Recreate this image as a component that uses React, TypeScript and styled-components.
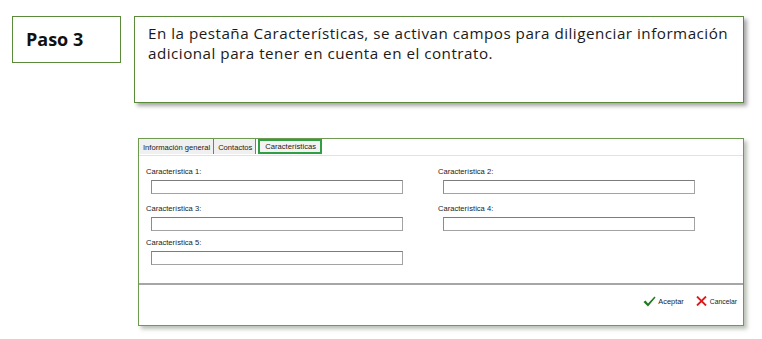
import React from "react";
import styled, { createGlobalStyle } from "styled-components";

const GlobalStyle = createGlobalStyle`
  html, body { margin: 0; padding: 0; background: #ffffff; }
  * { box-sizing: border-box; }
`;

const Page = styled.div`
  display: flex;
  flex-direction: column;
  padding: 16px 0 0 12px;
  width: 762px;
  height: 339px;
  overflow: hidden;
`;

const TopRow = styled.div`
  display: flex;
  align-items: flex-start;
  gap: 13px;
`;

const StepBox = styled.div`
  width: 109px;
  height: 47px;
  border: 1px solid #5b8a3a;
  display: flex;
  align-items: center;
  padding: 0 0 2px 13px;
  font-family: "Open Sans", "Noto Sans", sans-serif;
  font-weight: 700;
  font-size: 18px;
  color: #111;
`;

const NoteBox = styled.div`
  width: 610px;
  height: 87px;
  border: 1px solid #5b8a3a;
  box-shadow: 3px 3px 4px rgba(0, 0, 0, 0.35);
  padding: 6px 6px 0 13px;
  font-family: "Open Sans", "Noto Sans", sans-serif;
  font-size: 15.2px;
  letter-spacing: 0.5px;
  line-height: 20px;
  color: #1a1a1a;
`;

const Panel = styled.div`
  margin: 35px 0 0 126px;
  width: 606px;
  height: 188px;
  border: 1px solid #6e9a52;
  box-shadow: 3px 3px 4px rgba(80, 100, 70, 0.4);
  display: flex;
  flex-direction: column;
  font-family: "Liberation Sans", Arial, sans-serif;
  color: #222;
`;

const TabBar = styled.div`
  height: 17px;
  border-bottom: 1px solid #e2e2e2;
  display: flex;
  align-items: stretch;
  padding: 0 0 1px 0;
`;

const Tab = styled.div<{ $active?: boolean }>`
  display: flex;
  align-items: center;
  padding: ${(p) => (p.$active ? "0 4px 1px 5px" : "1px 3px 0 4px")};
  margin-left: ${(p) => (p.$active ? "2px" : "0")};
  background: ${(p) => (p.$active ? "#f3f3f3" : "#f0f0f0")};
  border: ${(p) => (p.$active ? "2px solid #2f9e44" : "none")};
  border-right: ${(p) => (p.$active ? "2px solid #2f9e44" : "1px solid #7a7a7a")};
  font-size: 7.6px;
  color: #1a1a1a;
  white-space: nowrap;
`;

const FormGrid = styled.div`
  flex: 1;
  display: grid;
  grid-template-columns: 292px 292px;
  grid-auto-rows: min-content;
  row-gap: 10px;
  padding: 11px 0 0 7px;
`;

const Field = styled.div<{ $tight?: boolean }>`
  display: flex;
  flex-direction: column;
  gap: 3px;
  margin-top: ${(p) => (p.$tight ? "-3px" : "0")};
`;

const Label = styled.div`
  font-size: 7.6px;
  line-height: 10px;
  color: #1a1a1a;
`;

const Input = styled.div`
  margin-left: 5px;
  width: 252px;
  height: 14px;
  border: 1px solid #a3a3a3;
  border-top-color: #7c7c7c;
  border-left-color: #8c8c8c;
  background: #fff;
`;

const Footer = styled.div`
  height: 42px;
  border-top: 2px solid #a6a6a6;
  display: flex;
  justify-content: flex-end;
  align-items: flex-start;
  gap: 12px;
  padding: 11px 6px 0 0;
`;

const Action = styled.div<{ $small?: boolean }>`
  display: flex;
  align-items: center;
  gap: ${(p) => (p.$small ? "3px" : "2px")};
  font-size: ${(p) => (p.$small ? "6.8px" : "7.4px")};
  color: #1a1a1a;
`;

const Check = () => (
  <svg width="13" height="11" viewBox="0 0 13 11">
    <path d="M0.5 6 L2.5 4.5 L5 7.5 L11.5 0.5 L12.5 1.5 L5 10.5 Z" fill="#1f7a1f" />
  </svg>
);

const Cross = () => (
  <svg width="11" height="10" viewBox="0 0 11 10">
    <path d="M1 0.5 L10 9.5 M10 0.5 L1 9.5" stroke="#e01818" strokeWidth="1.8" />
  </svg>
);

const fields = [1, 2, 3, 4, 5];

export default function App() {
  return (
    <>
      <GlobalStyle />
      <Page>
        <TopRow>
          <StepBox>Paso 3</StepBox>
          <NoteBox>
            En la pestaña Características, se activan campos para diligenciar información adicional para tener en cuenta en el contrato.
          </NoteBox>
        </TopRow>
        <Panel>
          <TabBar>
            <Tab>Información general</Tab>
            <Tab>Contactos</Tab>
            <Tab $active>Características</Tab>
          </TabBar>
          <FormGrid>
            {fields.map((n) => (
              <Field key={n} $tight={n === 5}>
                <Label>Característica {n}:</Label>
                <Input />
              </Field>
            ))}
          </FormGrid>
          <Footer>
            <Action>
              <Check />
              Aceptar
            </Action>
            <Action $small>
              <Cross />
              Cancelar
            </Action>
          </Footer>
        </Panel>
      </Page>
    </>
  );
}
